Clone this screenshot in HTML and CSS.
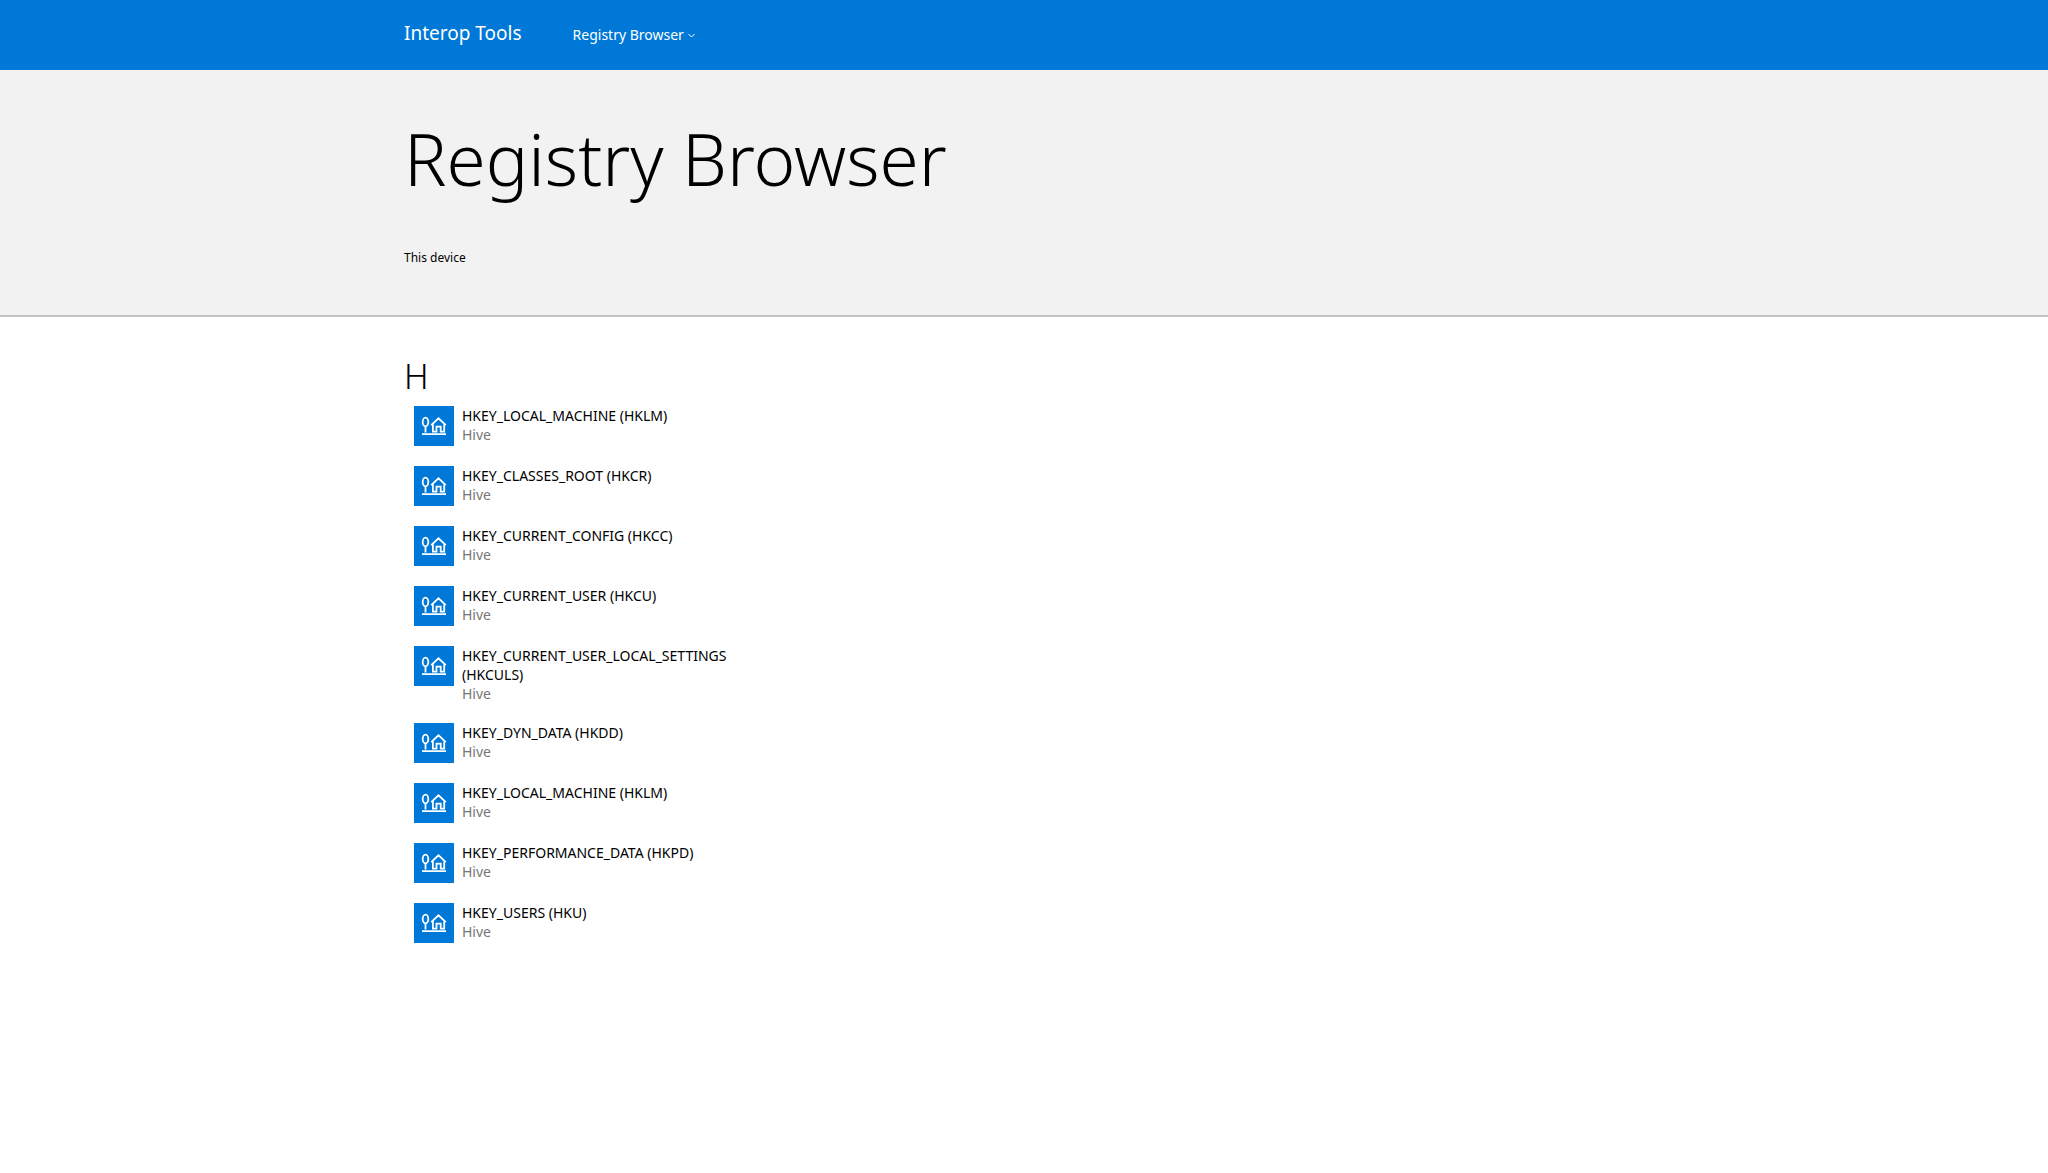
FILE: index.html
```html
<!DOCTYPE html>
<html lang="en">
<head>
<meta charset="utf-8">
<meta name="viewport" content="width=device-width, initial-scale=1">
<title>Registry Browser - Interop Tools</title>
<link rel="stylesheet" href="styles.css">
</head>
<body>
<svg class="defs" aria-hidden="true">
  <symbol id="hive" viewBox="0 0 40 40">
    <g fill="none" stroke="currentColor" stroke-width="1.8">
      <ellipse cx="11.5" cy="16" rx="2.8" ry="4.3"/>
      <path d="M11.5 20v6.4M8 28.2h24M17.2 19.2l7.3-6.9 7.3 6.9M18.9 17.8v7.8h3.6v-5h4.2v5h3.5v-7.8"/>
    </g>
  </symbol>
</svg>
<header class="topbar">
  <div class="container topbar-inner">
    <a class="brand" href="#">Interop Tools</a>
    <nav>
      <button class="menu" type="button" aria-haspopup="true">Registry Browser
        <svg class="chevron" viewBox="0 0 7 7" aria-hidden="true"><path d="M.5 2l3 3 3-3" fill="none" stroke="currentColor"/></svg>
      </button>
    </nav>
  </div>
</header>
<section class="hero">
  <div class="container">
    <h1 class="title">Registry Browser</h1>
    <p class="device">This device</p>
  </div>
</section>
<main class="container content">
  <h2 class="letter">H</h2>
  <ul class="hives">
    <li><a class="hive" href="#"><svg class="tile" aria-hidden="true"><use href="#hive"/></svg><span class="label"><span class="name">HKEY_LOCAL_MACHINE (HKLM)</span><span class="kind">Hive</span></span></a></li>
    <li><a class="hive" href="#"><svg class="tile" aria-hidden="true"><use href="#hive"/></svg><span class="label"><span class="name">HKEY_CLASSES_ROOT (HKCR)</span><span class="kind">Hive</span></span></a></li>
    <li><a class="hive" href="#"><svg class="tile" aria-hidden="true"><use href="#hive"/></svg><span class="label"><span class="name">HKEY_CURRENT_CONFIG (HKCC)</span><span class="kind">Hive</span></span></a></li>
    <li><a class="hive" href="#"><svg class="tile" aria-hidden="true"><use href="#hive"/></svg><span class="label"><span class="name">HKEY_CURRENT_USER (HKCU)</span><span class="kind">Hive</span></span></a></li>
    <li><a class="hive" href="#"><svg class="tile" aria-hidden="true"><use href="#hive"/></svg><span class="label"><span class="name">HKEY_CURRENT_USER_LOCAL_SETTINGS (HKCULS)</span><span class="kind">Hive</span></span></a></li>
    <li><a class="hive" href="#"><svg class="tile" aria-hidden="true"><use href="#hive"/></svg><span class="label"><span class="name">HKEY_DYN_DATA (HKDD)</span><span class="kind">Hive</span></span></a></li>
    <li><a class="hive" href="#"><svg class="tile" aria-hidden="true"><use href="#hive"/></svg><span class="label"><span class="name">HKEY_LOCAL_MACHINE (HKLM)</span><span class="kind">Hive</span></span></a></li>
    <li><a class="hive" href="#"><svg class="tile" aria-hidden="true"><use href="#hive"/></svg><span class="label"><span class="name">HKEY_PERFORMANCE_DATA (HKPD)</span><span class="kind">Hive</span></span></a></li>
    <li><a class="hive" href="#"><svg class="tile" aria-hidden="true"><use href="#hive"/></svg><span class="label"><span class="name">HKEY_USERS (HKU)</span><span class="kind">Hive</span></span></a></li>
  </ul>
</main>
</body>
</html>
```
FILE: styles.css
```css
* { box-sizing: border-box; }
body {
  margin: 0;
  background: #fff;
  color: #000;
  font: 14px/19px "Segoe UI", "Noto Sans", "Open Sans", sans-serif;
}
h1, h2, p, ul { margin: 0; padding: 0; }
ul { list-style: none; }
a { color: inherit; text-decoration: none; }
.defs { display: none; }
.container { max-width: 1240px; margin: 0 auto; }

.topbar { background: #0078d7; color: #fff; }
.topbar-inner {
  display: flex;
  align-items: baseline;
  gap: 51px;
  padding: 19px 0 23px;
}
.brand { font-size: 19px; line-height: 28px; }
.menu {
  display: inline-flex;
  align-items: center;
  gap: 4px;
  padding: 0;
  border: 0;
  background: none;
  color: inherit;
  font: inherit;
}
.chevron { width: 7px; height: 7px; margin-top: 2px; }

.hero {
  padding: 39px 0 48px;
  background: #f2f2f2;
  border-bottom: 2px solid #c4c4c4;
}
.title { font-size: 71px; line-height: 100px; font-weight: 300; }
.device { margin-top: 40px; font-size: 12px; line-height: 18px; }

.content { padding: 39px 0; }
.letter { font-size: 34px; line-height: 40px; font-weight: 300; }
.hives {
  display: grid;
  gap: 20px;
  margin-top: 10px;
  padding-left: 10px;
}
.hive { display: flex; gap: 8px; max-width: 328px; min-height: 40px; }
.tile { flex: none; width: 40px; height: 40px; background: #0078d7; color: #fff; }
.name, .kind { display: block; }
.kind { color: #767676; }
```
